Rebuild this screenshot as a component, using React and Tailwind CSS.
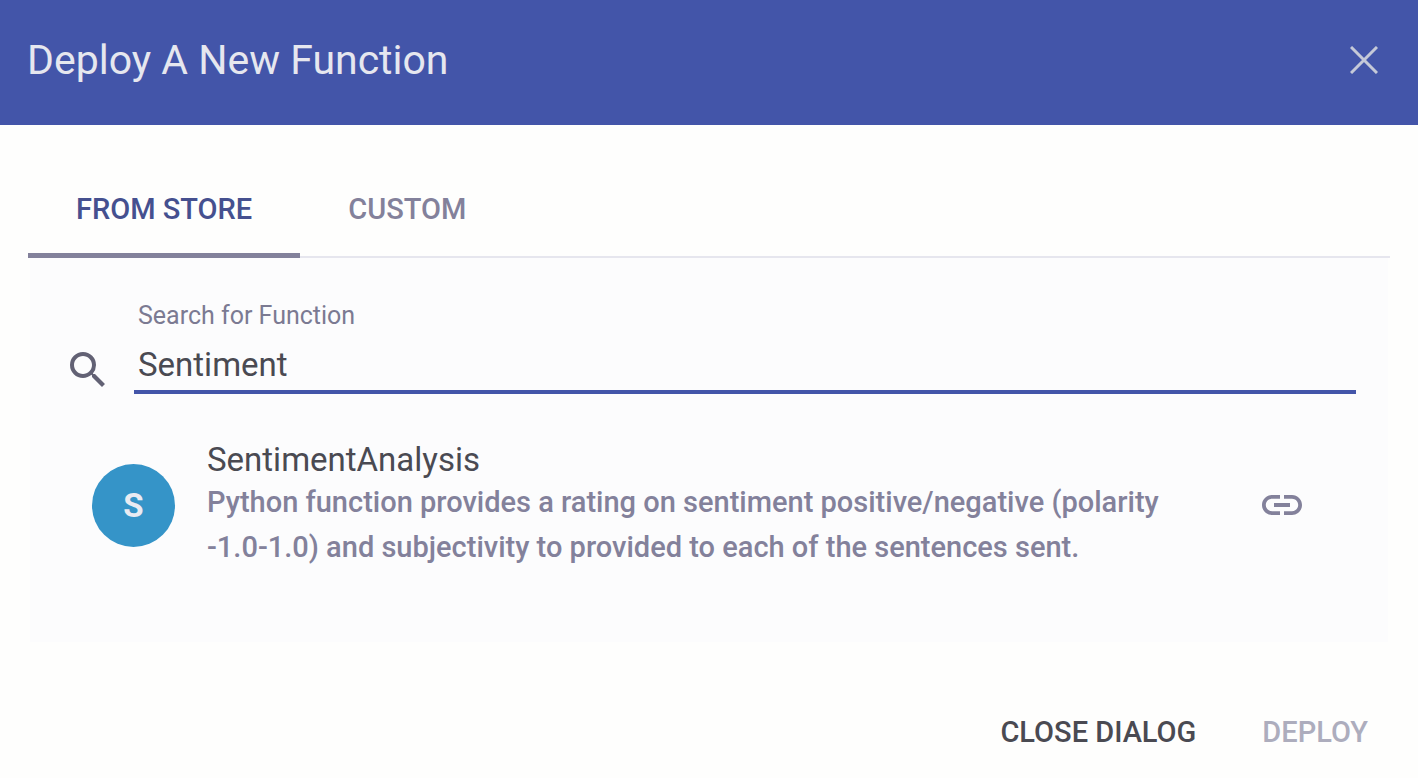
import { useState } from "react";
import { MdLink, MdSearch } from "react-icons/md";

function CloseIcon() {
  return (
    <svg viewBox="0 0 28 28" className="size-7" fill="none" stroke="currentColor" strokeWidth="3" aria-hidden="true">
      <path d="M1 1 27 27M27 1 1 27" />
    </svg>
  );
}

function Header() {
  return (
    <header className="flex h-[125px] items-center justify-between bg-[#4355a9] pr-10 pb-1.5 pl-[27px] text-[#e6e7ef]">
      <h1 className="text-[41px] leading-[48px]">Deploy A New Function</h1>
      <button type="button" aria-label="Close" className="text-[#c5c9d8]">
        <CloseIcon />
      </button>
    </header>
  );
}

function Tabs() {
  return (
    <div role="tablist" className="flex border-b-2 border-[#e6e6ee] text-[29px] leading-[40px] font-medium">
      <button
        type="button"
        role="tab"
        aria-selected="true"
        className="-mb-0.5 border-b-[5px] border-[#83819b] px-12 pt-4 pb-6 text-[#45508f]"
      >
        FROM STORE
      </button>
      <button
        type="button"
        role="tab"
        aria-selected="false"
        className="-mb-0.5 border-b-[5px] border-transparent px-12 pt-4 pb-6 text-[#83819b]"
      >
        CUSTOM
      </button>
    </div>
  );
}

function SearchField() {
  const [query, setQuery] = useState("Sentiment");
  return (
    <div className="flex items-end pr-8 pl-[34px]">
      <MdSearch className="size-12 shrink-0 text-[#626174]" aria-hidden="true" />
      <div className="ml-[22px] flex flex-1 flex-col">
        <label htmlFor="function-search" className="px-1 text-[25px] leading-[32px] text-[#7b7a92]">
          Search for Function
        </label>
        <input
          id="function-search"
          type="text"
          value={query}
          onChange={(event) => setQuery(event.target.value)}
          className="h-[62px] w-full border-b-4 border-[#4355a9] bg-transparent px-1 pt-1.5 text-[33px] leading-[40px] text-[#4a4a52] outline-none"
        />
      </div>
    </div>
  );
}

function FunctionItem() {
  return (
    <li className="flex items-center pr-[82px] pl-[62px]">
      <span className="flex size-[83px] shrink-0 items-center justify-center rounded-full bg-[#3594c8] text-[33px] leading-none font-bold text-[#e9ebf2]">
        S
      </span>
      <div className="ml-8 flex-1">
        <h2 className="text-[33px] leading-[40px] text-[#4a4a52]">SentimentAnalysis</h2>
        <p className="text-[29px] leading-[45px] font-medium text-[#83819b]">
          Python function provides a rating on sentiment positive/negative (polarity
          <br />
          -1.0-1.0) and subjectivity to provided to each of the sentences sent.
        </p>
      </div>
      <a href="#function" aria-label="Function link" className="text-[#83819b]">
        <MdLink className="size-12" aria-hidden="true" />
      </a>
    </li>
  );
}

export default function App() {
  return (
    <div className="flex min-h-screen flex-col bg-[#fefefd] font-[Roboto,sans-serif]">
      <Header />
      <main className="px-7 pt-12">
        <Tabs />
        <section className="mx-0.5 bg-[#fcfcfd] pt-[42px] pb-[72px]">
          <SearchField />
          <ul className="pt-[46px]">
            <FunctionItem />
          </ul>
        </section>
      </main>
      <footer className="mt-auto flex justify-end gap-[66px] pr-[50px] pb-[26px] text-[29px] leading-[40px] font-medium">
        <button type="button" className="text-[#4a4a52]">CLOSE DIALOG</button>
        <button type="button" disabled className="text-[#adadbd]">DEPLOY</button>
      </footer>
    </div>
  );
}
